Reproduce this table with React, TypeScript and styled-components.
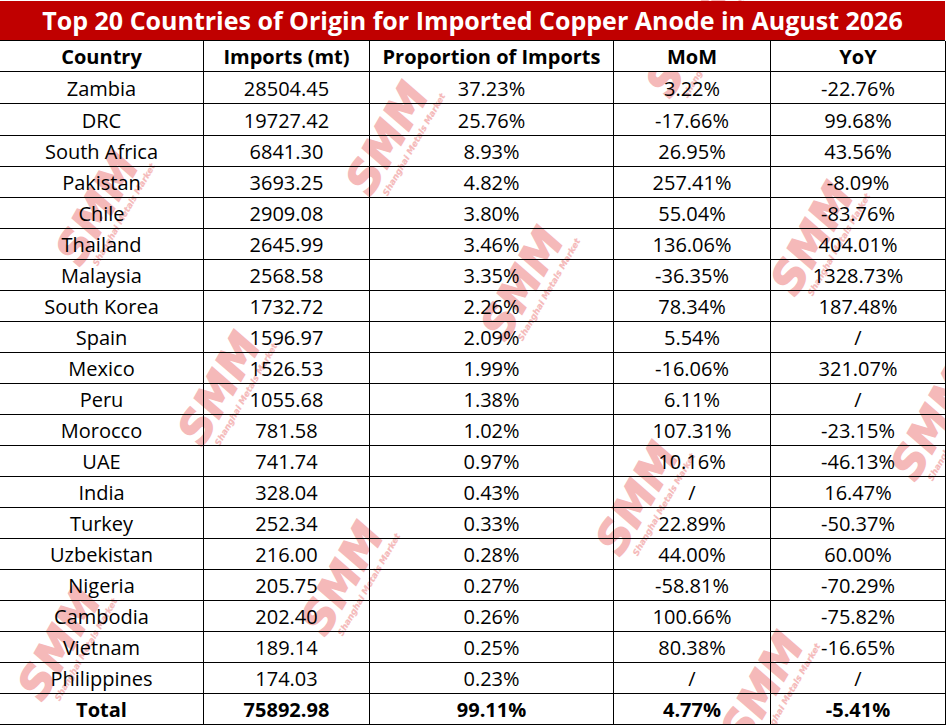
import styled, { createGlobalStyle } from 'styled-components';

const GlobalStyle = createGlobalStyle`
  html, body {
    margin: 0;
    padding: 0;
    background: #ffffff;
  }
  body {
    font-family: "Open Sans", "Noto Sans", "Liberation Sans", sans-serif;
    color: #000;
  }
`;

type Row = [string, string, string, string, string];

const rows: Row[] = [
  ['Zambia', '28504.45', '37.23%', '3.22%', '-22.76%'],
  ['DRC', '19727.42', '25.76%', '-17.66%', '99.68%'],
  ['South Africa', '6841.30', '8.93%', '26.95%', '43.56%'],
  ['Pakistan', '3693.25', '4.82%', '257.41%', '-8.09%'],
  ['Chile', '2909.08', '3.80%', '55.04%', '-83.76%'],
  ['Thailand', '2645.99', '3.46%', '136.06%', '404.01%'],
  ['Malaysia', '2568.58', '3.35%', '-36.35%', '1328.73%'],
  ['South Korea', '1732.72', '2.26%', '78.34%', '187.48%'],
  ['Spain', '1596.97', '2.09%', '5.54%', '/'],
  ['Mexico', '1526.53', '1.99%', '-16.06%', '321.07%'],
  ['Peru', '1055.68', '1.38%', '6.11%', '/'],
  ['Morocco', '781.58', '1.02%', '107.31%', '-23.15%'],
  ['UAE', '741.74', '0.97%', '10.16%', '-46.13%'],
  ['India', '328.04', '0.43%', '/', '16.47%'],
  ['Turkey', '252.34', '0.33%', '22.89%', '-50.37%'],
  ['Uzbekistan', '216.00', '0.28%', '44.00%', '60.00%'],
  ['Nigeria', '205.75', '0.27%', '-58.81%', '-70.29%'],
  ['Cambodia', '202.40', '0.26%', '100.66%', '-75.82%'],
  ['Vietnam', '189.14', '0.25%', '80.38%', '-16.65%'],
  ['Philippines', '174.03', '0.23%', '/', '/'],
];

const headers: Row = ['Country', 'Imports (mt)', 'Proportion of Imports', 'MoM', 'YoY'];
const total: Row = ['Total', '75892.98', '99.11%', '4.77%', '-5.41%'];

// watermark centres, measured off the source sheet
const marks: [number, number][] = [
  [100, 210],
  [390, 140],
  [525, 285],
  [815, 240],
  [222, 390],
  [640, 500],
  [935, 425],
  [345, 580],
  [62, 645],
  [765, 690],
  [690, 42],
];

const Sheet = styled.div`
  position: relative;
  width: 946px;
  height: 725px;
  overflow: hidden;
  background: #ffffff;
`;

const MarkLayer = styled.svg`
  position: absolute;
  inset: 0;
  z-index: 0;
  pointer-events: none;
`;

const Content = styled.div`
  position: relative;
  z-index: 1;
  padding-top: 1px;
`;

const Title = styled.div`
  height: 39px;
  width: 945px;
  background: #c00000;
  color: #ffffff;
  font-size: 25px;
  font-weight: 700;
  line-height: 39px;
  text-align: center;
  border-bottom: 1px solid #000;
  white-space: nowrap;
`;

const Grid = styled.div`
  display: grid;
  grid-template-columns: 204px 166px 244px 157px 175px;
  grid-template-rows: 31px 32px 32px repeat(19, 31px);
`;

const Cell = styled.div<{ $bold?: boolean; $filled?: boolean }>`
  box-sizing: border-box;
  border-right: 1px solid #000;
  border-bottom: 1px solid #000;
  display: flex;
  align-items: center;
  justify-content: center;
  padding-top: 1px;
  font-size: 20px;
  font-weight: ${(p) => (p.$bold ? 700 : 400)};
  background: ${(p) => (p.$filled ? '#ffffff' : 'transparent')};
  white-space: nowrap;
`;

const MarkText = styled.text`
  font-family: "DejaVu Sans", "Liberation Sans", sans-serif;
  font-weight: 700;
  font-style: italic;
  fill: #ec7a7a;
  stroke: #ec7a7a;
`;

function Watermark({ x, y }: { x: number; y: number }) {
  return (
    <g transform={`translate(${x} ${y}) rotate(-60)`} opacity={0.52}>
      <MarkText x={0} y={12} fontSize={44} strokeWidth={1.5} textAnchor="middle">
        SMM
      </MarkText>
      <MarkText x={8} y={26} fontSize={8.5} strokeWidth={0.2} textAnchor="middle">
        Shanghai Metals Market
      </MarkText>
    </g>
  );
}

function TableRow({ cells, bold, filled }: { cells: Row; bold?: boolean; filled?: boolean }) {
  return (
    <>
      {cells.map((c, i) => (
        <Cell key={i} $bold={bold} $filled={filled}>
          {c}
        </Cell>
      ))}
    </>
  );
}

export default function App() {
  return (
    <>
      <GlobalStyle />
      <Sheet>
        <MarkLayer width="946" height="725" viewBox="0 0 946 725">
          {marks.map(([x, y], i) => (
            <Watermark key={i} x={x} y={y} />
          ))}
        </MarkLayer>
        <Content>
          <Title>Top 20 Countries of Origin for Imported Copper Anode in August 2026</Title>
          <Grid>
            <TableRow cells={headers} bold filled />
            {rows.map((r) => (
              <TableRow key={r[0]} cells={r} />
            ))}
            <TableRow cells={total} bold />
          </Grid>
        </Content>
      </Sheet>
    </>
  );
}
